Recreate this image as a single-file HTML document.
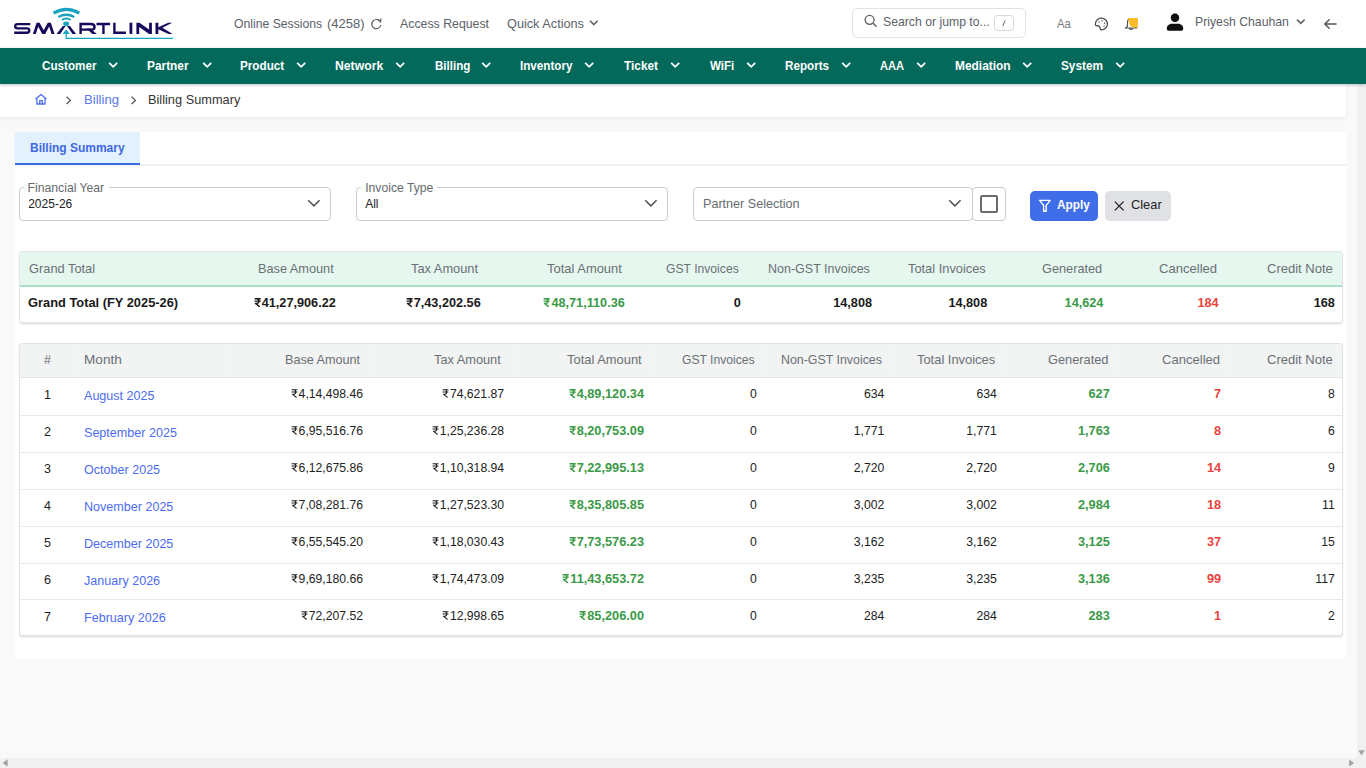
<!DOCTYPE html>
<html><head><meta charset="utf-8"><title>Billing Summary</title><style>
*{margin:0;padding:0}
html,body{width:1366px;height:768px;overflow:hidden;background:#f9f9f9}
body{position:relative;font-family:"Liberation Sans",sans-serif}
.t{position:absolute;line-height:1;white-space:nowrap}
.nv{position:absolute;top:59.5px;height:14px;font-size:11.75px;font-weight:700;color:#fff;line-height:14px;white-space:nowrap;z-index:3}
.rs{display:inline-block;vertical-align:baseline;position:relative;top:0.02em}
</style></head>
<body>
<div style="position:absolute;left:0px;top:0px;width:1366px;height:768px;background:#f9f9f9"></div>
<div style="position:absolute;left:0px;top:0px;width:1366px;height:48px;background:#fff"></div>
<svg style="position:absolute;left:0px;top:0px;" width="190" height="48" viewBox="0 0 190 48"><path d="M30.3 24.05 H17.6 Q15.2 24.05 15.2 26.2 Q15.2 28.3 17.6 28.3 H26.9 Q29.3 28.3 29.3 30.55 Q29.3 32.75 26.9 32.75 H14.2" fill="none" stroke="#160a5a" stroke-width="2.3" /><path d="M32.9 33.9 L36.6 22.8 L39.6 22.8 L43.7 30.2 L47.8 22.8 L50.8 22.8 L54.5 33.9 L51.6 33.9 L49.2 26.4 L45.2 33.9 L42.2 33.9 L38.2 26.4 L35.8 33.9Z" fill="#160a5a"/><path d="M56.5 33.9 L62.8 25.9 L65.6 25.9 L60.2 33.9Z M67.0 25.9 L69.9 25.9 L76.1 33.9 L72.5 33.9Z" fill="#160a5a"/><path d="M80.6 33.9 V24.05 H90.6 Q94.6 24.05 94.6 26.9 Q94.6 29.6 90.6 29.6 H80.6" fill="none" stroke="#160a5a" stroke-width="2.4" /><path d="M86.4 28.6 L90.4 28.6 L96.8 33.9 L92.4 33.9Z" fill="#160a5a"/><path d="M96.5 24.05 H110.1 M103.45 24 V33.9" fill="none" stroke="#160a5a" stroke-width="2.4" /><path d="M114.4 22.7 V32.75 H125.9" fill="none" stroke="#160a5a" stroke-width="2.4" /><path d="M130.9 22.7 V33.9" fill="none" stroke="#160a5a" stroke-width="2.8" /><path d="M136.4 33.9 V22.7 H139.4 L149.1 29.6 V22.7 H151.9 V33.9 H149.1 L139.2 26.9 V33.9Z" fill="#160a5a"/><path d="M155.5 22.7 H158.3 V27.2 L168.2 22.7 H172.3 L162.4 27.8 L172.6 33.9 H168.4 L158.3 29.2 V33.9 H155.5Z" fill="#160a5a"/><ellipse cx="66.2" cy="23.7" rx="3.0" ry="2.3" fill="#1aa4c2"/><path d="M62.6 33.9 L66.2 29.2 L69.9 33.9Z" fill="#1aa4c2"/><path d="M53.6 13.2 Q66.4 5.4 79.3 13.2" fill="none" stroke="#1aa4c2" stroke-width="3.2"/><path d="M58.4 17 Q66.3 12.6 74.2 17" fill="none" stroke="#1aa4c2" stroke-width="2.5"/><path d="M61.8 20 Q66.2 17.2 70.6 20" fill="none" stroke="#1aa4c2" stroke-width="2"/><path d="M66.2 33.5 V38.3 H173" fill="none" stroke="#1aa4c2" stroke-width="1.3"/></svg>
<div class="t" style="left:233.92px;top:16.89px;font-size:13px;font-weight:400;color:#5c6167;transform:scaleX(0.9380);transform-origin:0 0;">Online Sessions</div>
<div class="t" style="left:327.40px;top:16.89px;font-size:13px;font-weight:400;color:#5c6167;transform:scaleX(0.9982);transform-origin:0 0;">(4258)</div>
<svg style="position:absolute;left:370px;top:18px;" width="13" height="12" viewBox="0 0 13 12"><path d="M10.3 3.6 A4.6 4.6 0 1 0 10.9 7.2" fill="none" stroke="#5c6167" stroke-width="1.2"/><path d="M7.8 1.2 L10.6 3.8 L11 0.4" fill="none" stroke="#5c6167" stroke-width="1.2"/></svg>
<div class="t" style="left:400.48px;top:16.89px;font-size:13px;font-weight:400;color:#5c6167;transform:scaleX(0.9476);transform-origin:0 0;">Access Request</div>
<div class="t" style="left:507.40px;top:16.89px;font-size:13px;font-weight:400;color:#5c6167;transform:scaleX(0.9772);transform-origin:0 0;">Quick Actions</div>
<svg style="position:absolute;left:589px;top:19px;" width="10" height="8" viewBox="0 0 10 8"><path d="M1 1.8 L4.8 5.6 L8.6 1.8" fill="none" stroke="#5c6167" stroke-width="1.5"/></svg>
<div style="position:absolute;left:852px;top:8px;width:174px;height:30px;background:#fff;border:1px solid #dfe2e6;border-radius:5px;box-sizing:border-box"></div>
<svg style="position:absolute;left:864px;top:14px;" width="14" height="14" viewBox="0 0 14 14"><circle cx="5.6" cy="5.8" r="4.5" fill="none" stroke="#5c6167" stroke-width="1.3"/><path d="M8.9 9.1 L12.6 12.8" stroke="#5c6167" stroke-width="1.4"/></svg>
<div class="t" style="left:882.64px;top:15.55px;font-size:12.7px;font-weight:400;color:#5c6167;transform:scaleX(0.9644);transform-origin:0 0;">Search or jump to...</div>
<div style="position:absolute;left:994px;top:15px;width:20px;height:16px;border:1px solid #d5d8dc;border-radius:4px;box-sizing:border-box"></div>
<svg style="position:absolute;left:1000px;top:18px;" width="8" height="10" viewBox="0 0 8 10"><path d="M5.2 2.4 L2.8 8" stroke="#5c6167" stroke-width="1"/></svg>
<div class="t" style="left:1057.28px;top:17.53px;font-size:12.6px;font-weight:400;color:#7a7d80;transform:scaleX(0.8973);transform-origin:0 0;">Aa</div>
<svg style="position:absolute;left:1094px;top:17px;" width="15" height="14" viewBox="0 0 15 14"><path d="M7.2 1.2 C11 1.2 13.6 3.8 13.4 7.2 C13.2 10.6 10.4 12.9 7.6 12.9 C5.6 12.9 6.6 10.6 5.3 9.4 C4 8.2 1.6 9.4 1.4 7.8 C1.1 4.3 3.6 1.2 7.2 1.2Z" fill="none" stroke="#4b5157" stroke-width="1.3"/><circle cx="5" cy="5" r="0.7" fill="#4b5157"/><circle cx="8" cy="3.8" r="0.7" fill="#4b5157"/><circle cx="10.6" cy="6.2" r="0.7" fill="#4b5157"/><circle cx="10" cy="9.3" r="0.7" fill="#4b5157"/></svg>
<svg style="position:absolute;left:1124px;top:17px;" width="15" height="14" viewBox="0 0 15 14"><path d="M7 1.6 C4.2 1.6 3.4 4 3.4 6 L3.4 9.4 L1.6 11 L12.4 11 L10.6 9.4 L10.6 6 C10.6 4 9.8 1.6 7 1.6Z M5.4 11.4 C5.6 12.8 8.4 12.8 8.6 11.4" fill="none" stroke="#4b5157" stroke-width="1.1"/><path d="M4 1 H14 V10.6 H10 C7.4 10.6 5.2 8 4.8 5.2Z" fill="#fbbd2b"/></svg>
<svg style="position:absolute;left:1166px;top:13px;" width="18" height="18" viewBox="0 0 18 18"><circle cx="9" cy="4.8" r="4.2" fill="#111" stroke="#fff" stroke-width="0.8"/><path d="M0.8 15.4 C0.8 12.4 3.6 10.8 6 10.8 H12 C14.4 10.8 17.2 12.4 17.2 15.4 C17.2 17.2 16.4 17.8 15.2 17.8 H2.8 C1.6 17.8 0.8 17.2 0.8 15.4Z" fill="#111"/><circle cx="9" cy="4.8" r="4.2" fill="#111"/></svg>
<div class="t" style="left:1194.90px;top:15.76px;font-size:12.8px;font-weight:400;color:#5c6167;transform:scaleX(0.9565);transform-origin:0 0;">Priyesh Chauhan</div>
<svg style="position:absolute;left:1296px;top:18px;" width="10" height="8" viewBox="0 0 10 8"><path d="M1 1.6 L4.8 5.4 L8.6 1.6" fill="none" stroke="#5c6167" stroke-width="1.5"/></svg>
<svg style="position:absolute;left:1323px;top:18px;" width="15" height="12" viewBox="0 0 15 12"><path d="M13.6 6 H2 M6.6 1.2 L1.8 6 L6.6 10.8" fill="none" stroke="#50555b" stroke-width="1.4"/></svg>
<div style="position:absolute;left:0px;top:48px;width:1366px;height:36px;background:#02695b;box-shadow:0 1px 3px rgba(0,0,0,.25);z-index:2"></div>
<div class="t" style="left:41.62px;top:59.29px;font-size:13px;font-weight:700;color:#fff;transform:scaleX(0.8975);transform-origin:0 0;z-index:3">Customer</div>
<svg style="position:absolute;left:108.2px;top:61px;z-index:3" width="11" height="9" viewBox="0 0 11 9"><path d="M1.2 1.8 L5.2 5.8 L9.2 1.8" fill="none" stroke="#fff" stroke-width="1.8"/></svg>
<div class="t" style="left:147.21px;top:59.29px;font-size:13px;font-weight:700;color:#fff;transform:scaleX(0.9133);transform-origin:0 0;z-index:3">Partner</div>
<svg style="position:absolute;left:201.6px;top:61px;z-index:3" width="11" height="9" viewBox="0 0 11 9"><path d="M1.2 1.8 L5.2 5.8 L9.2 1.8" fill="none" stroke="#fff" stroke-width="1.8"/></svg>
<div class="t" style="left:240.02px;top:59.29px;font-size:13px;font-weight:700;color:#fff;transform:scaleX(0.9005);transform-origin:0 0;z-index:3">Product</div>
<svg style="position:absolute;left:295.59999999999997px;top:61px;z-index:3" width="11" height="9" viewBox="0 0 11 9"><path d="M1.2 1.8 L5.2 5.8 L9.2 1.8" fill="none" stroke="#fff" stroke-width="1.8"/></svg>
<div class="t" style="left:335.08px;top:59.29px;font-size:13px;font-weight:700;color:#fff;transform:scaleX(0.9399);transform-origin:0 0;z-index:3">Network</div>
<svg style="position:absolute;left:395.09999999999997px;top:61px;z-index:3" width="11" height="9" viewBox="0 0 11 9"><path d="M1.2 1.8 L5.2 5.8 L9.2 1.8" fill="none" stroke="#fff" stroke-width="1.8"/></svg>
<div class="t" style="left:434.63px;top:59.29px;font-size:13px;font-weight:700;color:#fff;transform:scaleX(0.8874);transform-origin:0 0;z-index:3">Billing</div>
<svg style="position:absolute;left:480.9px;top:61px;z-index:3" width="11" height="9" viewBox="0 0 11 9"><path d="M1.2 1.8 L5.2 5.8 L9.2 1.8" fill="none" stroke="#fff" stroke-width="1.8"/></svg>
<div class="t" style="left:520.12px;top:59.29px;font-size:13px;font-weight:700;color:#fff;transform:scaleX(0.8962);transform-origin:0 0;z-index:3">Inventory</div>
<svg style="position:absolute;left:584.0px;top:61px;z-index:3" width="11" height="9" viewBox="0 0 11 9"><path d="M1.2 1.8 L5.2 5.8 L9.2 1.8" fill="none" stroke="#fff" stroke-width="1.8"/></svg>
<div class="t" style="left:624.17px;top:59.29px;font-size:13px;font-weight:700;color:#fff;transform:scaleX(0.9100);transform-origin:0 0;z-index:3">Ticket</div>
<svg style="position:absolute;left:669.5px;top:61px;z-index:3" width="11" height="9" viewBox="0 0 11 9"><path d="M1.2 1.8 L5.2 5.8 L9.2 1.8" fill="none" stroke="#fff" stroke-width="1.8"/></svg>
<div class="t" style="left:709.69px;top:59.29px;font-size:13px;font-weight:700;color:#fff;transform:scaleX(0.8906);transform-origin:0 0;z-index:3">WiFi</div>
<svg style="position:absolute;left:745.9000000000001px;top:61px;z-index:3" width="11" height="9" viewBox="0 0 11 9"><path d="M1.2 1.8 L5.2 5.8 L9.2 1.8" fill="none" stroke="#fff" stroke-width="1.8"/></svg>
<div class="t" style="left:784.62px;top:59.29px;font-size:13px;font-weight:700;color:#fff;transform:scaleX(0.8970);transform-origin:0 0;z-index:3">Reports</div>
<svg style="position:absolute;left:840.9000000000001px;top:61px;z-index:3" width="11" height="9" viewBox="0 0 11 9"><path d="M1.2 1.8 L5.2 5.8 L9.2 1.8" fill="none" stroke="#fff" stroke-width="1.8"/></svg>
<div class="t" style="left:880.12px;top:59.29px;font-size:13px;font-weight:700;color:#fff;transform:scaleX(0.8546);transform-origin:0 0;z-index:3">AAA</div>
<svg style="position:absolute;left:915.7px;top:61px;z-index:3" width="11" height="9" viewBox="0 0 11 9"><path d="M1.2 1.8 L5.2 5.8 L9.2 1.8" fill="none" stroke="#fff" stroke-width="1.8"/></svg>
<div class="t" style="left:955.30px;top:59.29px;font-size:13px;font-weight:700;color:#fff;transform:scaleX(0.9171);transform-origin:0 0;z-index:3">Mediation</div>
<svg style="position:absolute;left:1022.2px;top:61px;z-index:3" width="11" height="9" viewBox="0 0 11 9"><path d="M1.2 1.8 L5.2 5.8 L9.2 1.8" fill="none" stroke="#fff" stroke-width="1.8"/></svg>
<div class="t" style="left:1061.36px;top:59.29px;font-size:13px;font-weight:700;color:#fff;transform:scaleX(0.9075);transform-origin:0 0;z-index:3">System</div>
<svg style="position:absolute;left:1114.7px;top:61px;z-index:3" width="11" height="9" viewBox="0 0 11 9"><path d="M1.2 1.8 L5.2 5.8 L9.2 1.8" fill="none" stroke="#fff" stroke-width="1.8"/></svg>
<div style="position:absolute;left:0px;top:84px;width:1346px;height:33px;background:#fff;box-shadow:0 1px 3px rgba(0,0,0,.08)"></div>
<svg style="position:absolute;left:34px;top:93px;" width="14" height="13" viewBox="0 0 14 13"><path d="M1.6 6 L7 1.6 L12.4 6 M2.9 5.1 V11 H11.1 V5.1 M5.7 11 V7.6 H8.3 V11" fill="none" stroke="#4d6ef0" stroke-width="1.3" stroke-linejoin="round"/></svg>
<svg style="position:absolute;left:65px;top:96px;" width="8" height="9" viewBox="0 0 8 9"><path d="M1.6 0.8 L5.4 4.4 L1.6 8" fill="none" stroke="#555" stroke-width="1.3"/></svg>
<div class="t" style="left:83.92px;top:94.05px;font-size:12.7px;font-weight:400;color:#5a78ee;transform:scaleX(1.0347);transform-origin:0 0;">Billing</div>
<svg style="position:absolute;left:130px;top:96px;" width="8" height="9" viewBox="0 0 8 9"><path d="M1.6 0.8 L5.4 4.4 L1.6 8" fill="none" stroke="#555" stroke-width="1.3"/></svg>
<div class="t" style="left:148.25px;top:94.05px;font-size:12.7px;font-weight:400;color:#333;transform:scaleX(1.0067);transform-origin:0 0;">Billing Summary</div>
<div style="position:absolute;left:15px;top:132px;width:1331px;height:527px;background:#fff;border-radius:4px"></div>
<div style="position:absolute;left:15px;top:164px;width:1331px;height:2px;background:#f0f0f0"></div>
<div style="position:absolute;left:15px;top:132px;width:125px;height:33px;background:#e3f0fd;border-bottom:2px solid #3d6be6;box-sizing:border-box"></div>
<div class="t" style="left:30.00px;top:141.19px;font-size:13px;font-weight:700;color:#3f68e3;transform:scaleX(0.9219);transform-origin:0 0;">Billing Summary</div>
<div style="position:absolute;left:19px;top:187px;width:312px;height:34px;border:1px solid #c9ccd3;border-radius:4px;box-sizing:border-box"></div>
<div style="position:absolute;left:356px;top:187px;width:312px;height:34px;border:1px solid #c9ccd3;border-radius:4px;box-sizing:border-box"></div>
<div style="position:absolute;left:24px;top:185px;width:85px;height:5px;background:#fff"></div>
<div style="position:absolute;left:361px;top:185px;width:76px;height:5px;background:#fff"></div>
<div class="t" style="left:27.60px;top:181.67px;font-size:12.2px;font-weight:400;color:#666a70;">Financial Year</div>
<div class="t" style="left:28.20px;top:197.84px;font-size:12px;font-weight:400;color:#222;">2025-26</div>
<svg style="position:absolute;left:307px;top:199px;" width="14" height="9" viewBox="0 0 14 9"><path d="M1.2 1.2 L6.9 6.9 L12.6 1.2" fill="none" stroke="#555" stroke-width="1.5"/></svg>
<div class="t" style="left:365.20px;top:181.67px;font-size:12.2px;font-weight:400;color:#666a70;">Invoice Type</div>
<div class="t" style="left:365.20px;top:197.84px;font-size:12px;font-weight:400;color:#222;">All</div>
<svg style="position:absolute;left:644px;top:199px;" width="14" height="9" viewBox="0 0 14 9"><path d="M1.2 1.2 L6.9 6.9 L12.6 1.2" fill="none" stroke="#555" stroke-width="1.5"/></svg>
<div style="position:absolute;left:693px;top:187px;width:280px;height:34px;border:1px solid #c9ccd3;border-radius:4px;box-sizing:border-box"></div>
<div class="t" style="left:703.00px;top:197.53px;font-size:12.6px;font-weight:400;color:#666a70;">Partner Selection</div>
<svg style="position:absolute;left:948px;top:199px;" width="14" height="9" viewBox="0 0 14 9"><path d="M1.2 1.2 L6.9 6.9 L12.6 1.2" fill="none" stroke="#555" stroke-width="1.5"/></svg>
<div style="position:absolute;left:972px;top:187px;width:34px;height:34px;border:1px solid #c9ccd3;border-radius:4px;box-sizing:border-box"></div>
<div style="position:absolute;left:980px;top:195px;width:18px;height:18px;border:2px solid #6b6b6b;border-radius:2px;box-sizing:border-box"></div>
<div style="position:absolute;left:1030px;top:191px;width:68px;height:30px;background:#3f6ee8;border-radius:5px"></div>
<svg style="position:absolute;left:1038px;top:199px;" width="14" height="14" viewBox="0 0 14 14"><path d="M1.6 1.4 H12.2 L8.2 6.4 V12.2 H5.6 V6.4Z" fill="none" stroke="#fff" stroke-width="1.4" stroke-linejoin="round"/></svg>
<div class="t" style="left:1056.91px;top:199.12px;font-size:12.5px;font-weight:700;color:#fff;transform:scaleX(0.9463);transform-origin:0 0;">Apply</div>
<div style="position:absolute;left:1105px;top:191px;width:66px;height:30px;background:#dfe1e5;border-radius:5px"></div>
<svg style="position:absolute;left:1113px;top:200px;" width="12" height="12" viewBox="0 0 12 12"><path d="M1.8 1.6 L10.6 10.4 M10.6 1.6 L1.8 10.4" stroke="#222" stroke-width="1.3"/></svg>
<div class="t" style="left:1131.25px;top:199.33px;font-size:12.6px;font-weight:400;color:#222;transform:scaleX(1.0190);transform-origin:0 0;">Clear</div>
<div style="position:absolute;left:19px;top:251px;width:1324px;height:73px;border:1px solid #dfe3e6;border-bottom:2px solid #e2e4e8;border-radius:4px;box-sizing:border-box;box-shadow:0 1px 2px rgba(0,0,0,.07)"></div>
<div style="position:absolute;left:20px;top:252px;width:1322px;height:33px;background:#e6f7f0;border-radius:3px 3px 0 0"></div>
<div style="position:absolute;left:20px;top:285px;width:1322px;height:2px;background:#a9e0c9"></div>
<div class="t" style="left:28.65px;top:261.89px;font-size:13px;font-weight:400;color:#6b7075;transform:scaleX(0.9866);transform-origin:0 0;">Grand Total</div>
<div class="t" style="left:257.96px;top:261.99px;font-size:13px;font-weight:400;color:#6b7075;transform:scaleX(0.9794);transform-origin:0 0;">Base Amount</div>
<div class="t" style="left:411.01px;top:261.99px;font-size:13px;font-weight:400;color:#6b7075;transform:scaleX(0.9875);transform-origin:0 0;">Tax Amount</div>
<div class="t" style="left:547.21px;top:261.99px;font-size:13px;font-weight:400;color:#6b7075;transform:scaleX(0.9962);transform-origin:0 0;">Total Amount</div>
<div class="t" style="left:665.79px;top:261.99px;font-size:13px;font-weight:400;color:#6b7075;transform:scaleX(0.9350);transform-origin:0 0;">GST Invoices</div>
<div class="t" style="left:768.18px;top:261.99px;font-size:13px;font-weight:400;color:#6b7075;transform:scaleX(0.9611);transform-origin:0 0;">Non-GST Invoices</div>
<div class="t" style="left:908.01px;top:261.99px;font-size:13px;font-weight:400;color:#6b7075;transform:scaleX(0.9872);transform-origin:0 0;">Total Invoices</div>
<div class="t" style="left:1041.56px;top:261.99px;font-size:13px;font-weight:400;color:#6b7075;transform:scaleX(0.9793);transform-origin:0 0;">Generated</div>
<div class="t" style="left:1158.84px;top:261.99px;font-size:13px;font-weight:400;color:#6b7075;transform:scaleX(1.0050);transform-origin:0 0;">Cancelled</div>
<div class="t" style="left:1266.84px;top:261.99px;font-size:13px;font-weight:400;color:#6b7075;transform:scaleX(1.0014);transform-origin:0 0;">Credit Note</div>
<div class="t" style="left:27.67px;top:296.73px;font-size:12.6px;font-weight:700;color:#1a1a1a;transform:scaleX(1.0199);transform-origin:0 0;">Grand Total (FY 2025-26)</div>
<div class="t" style="right:1030.20px;top:296.95px;font-size:12.7px;font-weight:700;color:#1a1a1a;"><svg class="rs" width="7.11" height="9.14" viewBox="0 0 8 10.5" style="margin-right:1.02px"><path d="M0.6 0.9H7.6M0.6 3.6H7.6M0.6 0.9H3.2C6.4 0.9 6.4 6.2 3.2 6.2H1.6L6.6 10.2" fill="none" stroke="#1a1a1a" stroke-width="1.6" stroke-linejoin="round"/></svg>41,27,906.22</div>
<div class="t" style="right:885.30px;top:296.95px;font-size:12.7px;font-weight:700;color:#1a1a1a;"><svg class="rs" width="7.11" height="9.14" viewBox="0 0 8 10.5" style="margin-right:1.02px"><path d="M0.6 0.9H7.6M0.6 3.6H7.6M0.6 0.9H3.2C6.4 0.9 6.4 6.2 3.2 6.2H1.6L6.6 10.2" fill="none" stroke="#1a1a1a" stroke-width="1.6" stroke-linejoin="round"/></svg>7,43,202.56</div>
<div class="t" style="right:741.20px;top:296.95px;font-size:12.7px;font-weight:700;color:#3a9a47;"><svg class="rs" width="7.11" height="9.14" viewBox="0 0 8 10.5" style="margin-right:1.02px"><path d="M0.6 0.9H7.6M0.6 3.6H7.6M0.6 0.9H3.2C6.4 0.9 6.4 6.2 3.2 6.2H1.6L6.6 10.2" fill="none" stroke="#3a9a47" stroke-width="1.6" stroke-linejoin="round"/></svg>48,71,110.36</div>
<div class="t" style="right:625.20px;top:296.95px;font-size:12.7px;font-weight:700;color:#1a1a1a;">0</div>
<div class="t" style="right:494.00px;top:296.95px;font-size:12.7px;font-weight:700;color:#1a1a1a;">14,808</div>
<div class="t" style="right:378.80px;top:296.95px;font-size:12.7px;font-weight:700;color:#1a1a1a;">14,808</div>
<div class="t" style="right:262.60px;top:296.95px;font-size:12.7px;font-weight:700;color:#3a9a47;">14,624</div>
<div class="t" style="right:147.40px;top:296.95px;font-size:12.7px;font-weight:700;color:#e8433d;">184</div>
<div class="t" style="right:31.20px;top:296.95px;font-size:12.7px;font-weight:700;color:#1a1a1a;">168</div>
<div style="position:absolute;left:19px;top:343px;width:1324px;height:294px;border:1px solid #dfe2e6;border-bottom:2px solid #e2e4e8;border-radius:4px;box-sizing:border-box;box-shadow:0 1px 2px rgba(0,0,0,.07)"></div>
<div style="position:absolute;left:20px;top:344px;width:1322px;height:33px;background:#f2f3f3;border-radius:3px 3px 0 0"></div>
<div style="position:absolute;left:20px;top:377px;width:1322px;height:1px;background:#e3e5e8"></div>
<div style="position:absolute;left:76px;top:344px;width:1px;height:33px;background:#f5f6f6"></div>
<div style="position:absolute;left:231px;top:344px;width:1px;height:33px;background:#f5f6f6"></div>
<div style="position:absolute;left:371px;top:344px;width:1px;height:33px;background:#f5f6f6"></div>
<div style="position:absolute;left:512px;top:344px;width:1px;height:33px;background:#f5f6f6"></div>
<div style="position:absolute;left:653px;top:344px;width:1px;height:33px;background:#f5f6f6"></div>
<div style="position:absolute;left:764px;top:344px;width:1px;height:33px;background:#f5f6f6"></div>
<div style="position:absolute;left:892px;top:344px;width:1px;height:33px;background:#f5f6f6"></div>
<div style="position:absolute;left:1003px;top:344px;width:1px;height:33px;background:#f5f6f6"></div>
<div style="position:absolute;left:1116px;top:344px;width:1px;height:33px;background:#f5f6f6"></div>
<div style="position:absolute;left:1230px;top:344px;width:1px;height:33px;background:#f5f6f6"></div>
<div style="position:absolute;left:20px;top:415px;width:1322px;height:1px;background:#e6e8eb"></div>
<div style="position:absolute;left:20px;top:452px;width:1322px;height:1px;background:#e6e8eb"></div>
<div style="position:absolute;left:20px;top:489px;width:1322px;height:1px;background:#e6e8eb"></div>
<div style="position:absolute;left:20px;top:526px;width:1322px;height:1px;background:#e6e8eb"></div>
<div style="position:absolute;left:20px;top:563px;width:1322px;height:1px;background:#e6e8eb"></div>
<div style="position:absolute;left:20px;top:599px;width:1322px;height:1px;background:#e6e8eb"></div>
<div class="t" style="left:44.00px;top:353.50px;font-size:12.4px;font-weight:400;color:#6b7075;">#</div>
<div class="t" style="left:84.48px;top:352.99px;font-size:13px;font-weight:400;color:#6b7075;transform:scaleX(1.0462);transform-origin:0 0;">Month</div>
<div class="t" style="left:285.06px;top:353.19px;font-size:13px;font-weight:400;color:#6b7075;transform:scaleX(0.9716);transform-origin:0 0;">Base Amount</div>
<div class="t" style="left:434.01px;top:353.19px;font-size:13px;font-weight:400;color:#6b7075;transform:scaleX(0.9831);transform-origin:0 0;">Tax Amount</div>
<div class="t" style="left:566.61px;top:353.19px;font-size:13px;font-weight:400;color:#6b7075;transform:scaleX(0.9936);transform-origin:0 0;">Total Amount</div>
<div class="t" style="left:681.89px;top:353.19px;font-size:13px;font-weight:400;color:#6b7075;transform:scaleX(0.9337);transform-origin:0 0;">GST Invoices</div>
<div class="t" style="left:781.18px;top:353.19px;font-size:13px;font-weight:400;color:#6b7075;transform:scaleX(0.9525);transform-origin:0 0;">Non-GST Invoices</div>
<div class="t" style="left:917.21px;top:353.19px;font-size:13px;font-weight:400;color:#6b7075;transform:scaleX(0.9923);transform-origin:0 0;">Total Invoices</div>
<div class="t" style="left:1047.76px;top:353.19px;font-size:13px;font-weight:400;color:#6b7075;transform:scaleX(0.9843);transform-origin:0 0;">Generated</div>
<div class="t" style="left:1162.34px;top:353.19px;font-size:13px;font-weight:400;color:#6b7075;transform:scaleX(1.0050);transform-origin:0 0;">Cancelled</div>
<div class="t" style="left:1266.84px;top:353.19px;font-size:13px;font-weight:400;color:#6b7075;transform:scaleX(0.9998);transform-origin:0 0;">Credit Note</div>
<div class="t" style="left:47.50px;top:389.33px;font-size:12.6px;font-weight:400;color:#1e1e1e;transform:translateX(-50%)">1</div>
<div class="t" style="left:83.60px;top:390.20px;font-size:12.75px;font-weight:400;color:#4d6cf0;transform:scaleX(0.985);transform-origin:0 0;">August 2025</div>
<div class="t" style="right:1003.00px;top:387.97px;font-size:12.2px;font-weight:400;color:#222;"><svg class="rs" width="6.83" height="8.78" viewBox="0 0 8 10.5" style="margin-right:0.98px"><path d="M0.6 0.9H7.6M0.6 3.6H7.6M0.6 0.9H3.2C6.4 0.9 6.4 6.2 3.2 6.2H1.6L6.6 10.2" fill="none" stroke="#222" stroke-width="1.25" stroke-linejoin="round"/></svg>4,14,498.46</div>
<div class="t" style="right:861.90px;top:387.97px;font-size:12.2px;font-weight:400;color:#222;"><svg class="rs" width="6.83" height="8.78" viewBox="0 0 8 10.5" style="margin-right:0.98px"><path d="M0.6 0.9H7.6M0.6 3.6H7.6M0.6 0.9H3.2C6.4 0.9 6.4 6.2 3.2 6.2H1.6L6.6 10.2" fill="none" stroke="#222" stroke-width="1.25" stroke-linejoin="round"/></svg>74,621.87</div>
<div class="t" style="right:722.00px;top:387.50px;font-size:12.75px;font-weight:700;color:#3a9a47;"><svg class="rs" width="7.14" height="9.18" viewBox="0 0 8 10.5" style="margin-right:1.02px"><path d="M0.6 0.9H7.6M0.6 3.6H7.6M0.6 0.9H3.2C6.4 0.9 6.4 6.2 3.2 6.2H1.6L6.6 10.2" fill="none" stroke="#3a9a47" stroke-width="1.6" stroke-linejoin="round"/></svg>4,89,120.34</div>
<div class="t" style="right:609.30px;top:387.97px;font-size:12.2px;font-weight:400;color:#222;">0</div>
<div class="t" style="right:481.70px;top:387.97px;font-size:12.2px;font-weight:400;color:#222;">634</div>
<div class="t" style="right:369.20px;top:387.97px;font-size:12.2px;font-weight:400;color:#222;">634</div>
<div class="t" style="right:256.20px;top:387.50px;font-size:12.75px;font-weight:700;color:#3a9a47;">627</div>
<div class="t" style="right:144.80px;top:387.50px;font-size:12.75px;font-weight:700;color:#e8433d;">7</div>
<div class="t" style="right:31.30px;top:387.97px;font-size:12.2px;font-weight:400;color:#222;">8</div>
<div class="t" style="left:47.50px;top:426.33px;font-size:12.6px;font-weight:400;color:#1e1e1e;transform:translateX(-50%)">2</div>
<div class="t" style="left:83.60px;top:427.20px;font-size:12.75px;font-weight:400;color:#4d6cf0;transform:scaleX(0.985);transform-origin:0 0;">September 2025</div>
<div class="t" style="right:1003.00px;top:424.97px;font-size:12.2px;font-weight:400;color:#222;"><svg class="rs" width="6.83" height="8.78" viewBox="0 0 8 10.5" style="margin-right:0.98px"><path d="M0.6 0.9H7.6M0.6 3.6H7.6M0.6 0.9H3.2C6.4 0.9 6.4 6.2 3.2 6.2H1.6L6.6 10.2" fill="none" stroke="#222" stroke-width="1.25" stroke-linejoin="round"/></svg>6,95,516.76</div>
<div class="t" style="right:861.90px;top:424.97px;font-size:12.2px;font-weight:400;color:#222;"><svg class="rs" width="6.83" height="8.78" viewBox="0 0 8 10.5" style="margin-right:0.98px"><path d="M0.6 0.9H7.6M0.6 3.6H7.6M0.6 0.9H3.2C6.4 0.9 6.4 6.2 3.2 6.2H1.6L6.6 10.2" fill="none" stroke="#222" stroke-width="1.25" stroke-linejoin="round"/></svg>1,25,236.28</div>
<div class="t" style="right:722.00px;top:424.50px;font-size:12.75px;font-weight:700;color:#3a9a47;"><svg class="rs" width="7.14" height="9.18" viewBox="0 0 8 10.5" style="margin-right:1.02px"><path d="M0.6 0.9H7.6M0.6 3.6H7.6M0.6 0.9H3.2C6.4 0.9 6.4 6.2 3.2 6.2H1.6L6.6 10.2" fill="none" stroke="#3a9a47" stroke-width="1.6" stroke-linejoin="round"/></svg>8,20,753.09</div>
<div class="t" style="right:609.30px;top:424.97px;font-size:12.2px;font-weight:400;color:#222;">0</div>
<div class="t" style="right:481.70px;top:424.97px;font-size:12.2px;font-weight:400;color:#222;">1,771</div>
<div class="t" style="right:369.20px;top:424.97px;font-size:12.2px;font-weight:400;color:#222;">1,771</div>
<div class="t" style="right:256.20px;top:424.50px;font-size:12.75px;font-weight:700;color:#3a9a47;">1,763</div>
<div class="t" style="right:144.80px;top:424.50px;font-size:12.75px;font-weight:700;color:#e8433d;">8</div>
<div class="t" style="right:31.30px;top:424.97px;font-size:12.2px;font-weight:400;color:#222;">6</div>
<div class="t" style="left:47.50px;top:463.33px;font-size:12.6px;font-weight:400;color:#1e1e1e;transform:translateX(-50%)">3</div>
<div class="t" style="left:83.60px;top:464.20px;font-size:12.75px;font-weight:400;color:#4d6cf0;transform:scaleX(0.985);transform-origin:0 0;">October 2025</div>
<div class="t" style="right:1003.00px;top:461.97px;font-size:12.2px;font-weight:400;color:#222;"><svg class="rs" width="6.83" height="8.78" viewBox="0 0 8 10.5" style="margin-right:0.98px"><path d="M0.6 0.9H7.6M0.6 3.6H7.6M0.6 0.9H3.2C6.4 0.9 6.4 6.2 3.2 6.2H1.6L6.6 10.2" fill="none" stroke="#222" stroke-width="1.25" stroke-linejoin="round"/></svg>6,12,675.86</div>
<div class="t" style="right:861.90px;top:461.97px;font-size:12.2px;font-weight:400;color:#222;"><svg class="rs" width="6.83" height="8.78" viewBox="0 0 8 10.5" style="margin-right:0.98px"><path d="M0.6 0.9H7.6M0.6 3.6H7.6M0.6 0.9H3.2C6.4 0.9 6.4 6.2 3.2 6.2H1.6L6.6 10.2" fill="none" stroke="#222" stroke-width="1.25" stroke-linejoin="round"/></svg>1,10,318.94</div>
<div class="t" style="right:722.00px;top:461.50px;font-size:12.75px;font-weight:700;color:#3a9a47;"><svg class="rs" width="7.14" height="9.18" viewBox="0 0 8 10.5" style="margin-right:1.02px"><path d="M0.6 0.9H7.6M0.6 3.6H7.6M0.6 0.9H3.2C6.4 0.9 6.4 6.2 3.2 6.2H1.6L6.6 10.2" fill="none" stroke="#3a9a47" stroke-width="1.6" stroke-linejoin="round"/></svg>7,22,995.13</div>
<div class="t" style="right:609.30px;top:461.97px;font-size:12.2px;font-weight:400;color:#222;">0</div>
<div class="t" style="right:481.70px;top:461.97px;font-size:12.2px;font-weight:400;color:#222;">2,720</div>
<div class="t" style="right:369.20px;top:461.97px;font-size:12.2px;font-weight:400;color:#222;">2,720</div>
<div class="t" style="right:256.20px;top:461.50px;font-size:12.75px;font-weight:700;color:#3a9a47;">2,706</div>
<div class="t" style="right:144.80px;top:461.50px;font-size:12.75px;font-weight:700;color:#e8433d;">14</div>
<div class="t" style="right:31.30px;top:461.97px;font-size:12.2px;font-weight:400;color:#222;">9</div>
<div class="t" style="left:47.50px;top:500.33px;font-size:12.6px;font-weight:400;color:#1e1e1e;transform:translateX(-50%)">4</div>
<div class="t" style="left:83.60px;top:501.20px;font-size:12.75px;font-weight:400;color:#4d6cf0;transform:scaleX(0.985);transform-origin:0 0;">November 2025</div>
<div class="t" style="right:1003.00px;top:498.97px;font-size:12.2px;font-weight:400;color:#222;"><svg class="rs" width="6.83" height="8.78" viewBox="0 0 8 10.5" style="margin-right:0.98px"><path d="M0.6 0.9H7.6M0.6 3.6H7.6M0.6 0.9H3.2C6.4 0.9 6.4 6.2 3.2 6.2H1.6L6.6 10.2" fill="none" stroke="#222" stroke-width="1.25" stroke-linejoin="round"/></svg>7,08,281.76</div>
<div class="t" style="right:861.90px;top:498.97px;font-size:12.2px;font-weight:400;color:#222;"><svg class="rs" width="6.83" height="8.78" viewBox="0 0 8 10.5" style="margin-right:0.98px"><path d="M0.6 0.9H7.6M0.6 3.6H7.6M0.6 0.9H3.2C6.4 0.9 6.4 6.2 3.2 6.2H1.6L6.6 10.2" fill="none" stroke="#222" stroke-width="1.25" stroke-linejoin="round"/></svg>1,27,523.30</div>
<div class="t" style="right:722.00px;top:498.50px;font-size:12.75px;font-weight:700;color:#3a9a47;"><svg class="rs" width="7.14" height="9.18" viewBox="0 0 8 10.5" style="margin-right:1.02px"><path d="M0.6 0.9H7.6M0.6 3.6H7.6M0.6 0.9H3.2C6.4 0.9 6.4 6.2 3.2 6.2H1.6L6.6 10.2" fill="none" stroke="#3a9a47" stroke-width="1.6" stroke-linejoin="round"/></svg>8,35,805.85</div>
<div class="t" style="right:609.30px;top:498.97px;font-size:12.2px;font-weight:400;color:#222;">0</div>
<div class="t" style="right:481.70px;top:498.97px;font-size:12.2px;font-weight:400;color:#222;">3,002</div>
<div class="t" style="right:369.20px;top:498.97px;font-size:12.2px;font-weight:400;color:#222;">3,002</div>
<div class="t" style="right:256.20px;top:498.50px;font-size:12.75px;font-weight:700;color:#3a9a47;">2,984</div>
<div class="t" style="right:144.80px;top:498.50px;font-size:12.75px;font-weight:700;color:#e8433d;">18</div>
<div class="t" style="right:31.30px;top:498.97px;font-size:12.2px;font-weight:400;color:#222;">11</div>
<div class="t" style="left:47.50px;top:537.33px;font-size:12.6px;font-weight:400;color:#1e1e1e;transform:translateX(-50%)">5</div>
<div class="t" style="left:83.60px;top:538.20px;font-size:12.75px;font-weight:400;color:#4d6cf0;transform:scaleX(0.985);transform-origin:0 0;">December 2025</div>
<div class="t" style="right:1003.00px;top:535.97px;font-size:12.2px;font-weight:400;color:#222;"><svg class="rs" width="6.83" height="8.78" viewBox="0 0 8 10.5" style="margin-right:0.98px"><path d="M0.6 0.9H7.6M0.6 3.6H7.6M0.6 0.9H3.2C6.4 0.9 6.4 6.2 3.2 6.2H1.6L6.6 10.2" fill="none" stroke="#222" stroke-width="1.25" stroke-linejoin="round"/></svg>6,55,545.20</div>
<div class="t" style="right:861.90px;top:535.97px;font-size:12.2px;font-weight:400;color:#222;"><svg class="rs" width="6.83" height="8.78" viewBox="0 0 8 10.5" style="margin-right:0.98px"><path d="M0.6 0.9H7.6M0.6 3.6H7.6M0.6 0.9H3.2C6.4 0.9 6.4 6.2 3.2 6.2H1.6L6.6 10.2" fill="none" stroke="#222" stroke-width="1.25" stroke-linejoin="round"/></svg>1,18,030.43</div>
<div class="t" style="right:722.00px;top:535.50px;font-size:12.75px;font-weight:700;color:#3a9a47;"><svg class="rs" width="7.14" height="9.18" viewBox="0 0 8 10.5" style="margin-right:1.02px"><path d="M0.6 0.9H7.6M0.6 3.6H7.6M0.6 0.9H3.2C6.4 0.9 6.4 6.2 3.2 6.2H1.6L6.6 10.2" fill="none" stroke="#3a9a47" stroke-width="1.6" stroke-linejoin="round"/></svg>7,73,576.23</div>
<div class="t" style="right:609.30px;top:535.97px;font-size:12.2px;font-weight:400;color:#222;">0</div>
<div class="t" style="right:481.70px;top:535.97px;font-size:12.2px;font-weight:400;color:#222;">3,162</div>
<div class="t" style="right:369.20px;top:535.97px;font-size:12.2px;font-weight:400;color:#222;">3,162</div>
<div class="t" style="right:256.20px;top:535.50px;font-size:12.75px;font-weight:700;color:#3a9a47;">3,125</div>
<div class="t" style="right:144.80px;top:535.50px;font-size:12.75px;font-weight:700;color:#e8433d;">37</div>
<div class="t" style="right:31.30px;top:535.97px;font-size:12.2px;font-weight:400;color:#222;">15</div>
<div class="t" style="left:47.50px;top:574.33px;font-size:12.6px;font-weight:400;color:#1e1e1e;transform:translateX(-50%)">6</div>
<div class="t" style="left:83.60px;top:575.20px;font-size:12.75px;font-weight:400;color:#4d6cf0;transform:scaleX(0.985);transform-origin:0 0;">January 2026</div>
<div class="t" style="right:1003.00px;top:572.97px;font-size:12.2px;font-weight:400;color:#222;"><svg class="rs" width="6.83" height="8.78" viewBox="0 0 8 10.5" style="margin-right:0.98px"><path d="M0.6 0.9H7.6M0.6 3.6H7.6M0.6 0.9H3.2C6.4 0.9 6.4 6.2 3.2 6.2H1.6L6.6 10.2" fill="none" stroke="#222" stroke-width="1.25" stroke-linejoin="round"/></svg>9,69,180.66</div>
<div class="t" style="right:861.90px;top:572.97px;font-size:12.2px;font-weight:400;color:#222;"><svg class="rs" width="6.83" height="8.78" viewBox="0 0 8 10.5" style="margin-right:0.98px"><path d="M0.6 0.9H7.6M0.6 3.6H7.6M0.6 0.9H3.2C6.4 0.9 6.4 6.2 3.2 6.2H1.6L6.6 10.2" fill="none" stroke="#222" stroke-width="1.25" stroke-linejoin="round"/></svg>1,74,473.09</div>
<div class="t" style="right:722.00px;top:572.50px;font-size:12.75px;font-weight:700;color:#3a9a47;"><svg class="rs" width="7.14" height="9.18" viewBox="0 0 8 10.5" style="margin-right:1.02px"><path d="M0.6 0.9H7.6M0.6 3.6H7.6M0.6 0.9H3.2C6.4 0.9 6.4 6.2 3.2 6.2H1.6L6.6 10.2" fill="none" stroke="#3a9a47" stroke-width="1.6" stroke-linejoin="round"/></svg>11,43,653.72</div>
<div class="t" style="right:609.30px;top:572.97px;font-size:12.2px;font-weight:400;color:#222;">0</div>
<div class="t" style="right:481.70px;top:572.97px;font-size:12.2px;font-weight:400;color:#222;">3,235</div>
<div class="t" style="right:369.20px;top:572.97px;font-size:12.2px;font-weight:400;color:#222;">3,235</div>
<div class="t" style="right:256.20px;top:572.50px;font-size:12.75px;font-weight:700;color:#3a9a47;">3,136</div>
<div class="t" style="right:144.80px;top:572.50px;font-size:12.75px;font-weight:700;color:#e8433d;">99</div>
<div class="t" style="right:31.30px;top:572.97px;font-size:12.2px;font-weight:400;color:#222;">117</div>
<div class="t" style="left:47.50px;top:611.33px;font-size:12.6px;font-weight:400;color:#1e1e1e;transform:translateX(-50%)">7</div>
<div class="t" style="left:83.60px;top:612.20px;font-size:12.75px;font-weight:400;color:#4d6cf0;transform:scaleX(0.985);transform-origin:0 0;">February 2026</div>
<div class="t" style="right:1003.00px;top:609.97px;font-size:12.2px;font-weight:400;color:#222;"><svg class="rs" width="6.83" height="8.78" viewBox="0 0 8 10.5" style="margin-right:0.98px"><path d="M0.6 0.9H7.6M0.6 3.6H7.6M0.6 0.9H3.2C6.4 0.9 6.4 6.2 3.2 6.2H1.6L6.6 10.2" fill="none" stroke="#222" stroke-width="1.25" stroke-linejoin="round"/></svg>72,207.52</div>
<div class="t" style="right:861.90px;top:609.97px;font-size:12.2px;font-weight:400;color:#222;"><svg class="rs" width="6.83" height="8.78" viewBox="0 0 8 10.5" style="margin-right:0.98px"><path d="M0.6 0.9H7.6M0.6 3.6H7.6M0.6 0.9H3.2C6.4 0.9 6.4 6.2 3.2 6.2H1.6L6.6 10.2" fill="none" stroke="#222" stroke-width="1.25" stroke-linejoin="round"/></svg>12,998.65</div>
<div class="t" style="right:722.00px;top:609.50px;font-size:12.75px;font-weight:700;color:#3a9a47;"><svg class="rs" width="7.14" height="9.18" viewBox="0 0 8 10.5" style="margin-right:1.02px"><path d="M0.6 0.9H7.6M0.6 3.6H7.6M0.6 0.9H3.2C6.4 0.9 6.4 6.2 3.2 6.2H1.6L6.6 10.2" fill="none" stroke="#3a9a47" stroke-width="1.6" stroke-linejoin="round"/></svg>85,206.00</div>
<div class="t" style="right:609.30px;top:609.97px;font-size:12.2px;font-weight:400;color:#222;">0</div>
<div class="t" style="right:481.70px;top:609.97px;font-size:12.2px;font-weight:400;color:#222;">284</div>
<div class="t" style="right:369.20px;top:609.97px;font-size:12.2px;font-weight:400;color:#222;">284</div>
<div class="t" style="right:256.20px;top:609.50px;font-size:12.75px;font-weight:700;color:#3a9a47;">283</div>
<div class="t" style="right:144.80px;top:609.50px;font-size:12.75px;font-weight:700;color:#e8433d;">1</div>
<div class="t" style="right:31.30px;top:609.97px;font-size:12.2px;font-weight:400;color:#222;">2</div>
<div style="position:absolute;left:1357px;top:84px;width:9px;height:674px;background:#f1f1f1"></div>
<div style="position:absolute;left:0px;top:758px;width:1357px;height:10px;background:#f1f1f1"></div>
<div style="position:absolute;left:1357px;top:758px;width:9px;height:10px;background:#f1f1f1"></div>
<svg style="position:absolute;left:1357px;top:749px;" width="9" height="8" viewBox="0 0 9 8"><path d="M1.2 1.2 H7.8 L4.5 6.4Z" fill="#a3a3a3"/></svg>
<svg style="position:absolute;left:1px;top:758px;" width="9" height="10" viewBox="0 0 9 10"><path d="M6.6 1.2 V8.8 L1.6 5Z" fill="#a3a3a3"/></svg>
<svg style="position:absolute;left:1347px;top:758px;" width="9" height="10" viewBox="0 0 9 10"><path d="M2.2 1.6 V8.6 L7.2 5Z" fill="#a3a3a3"/></svg>
</body></html>
